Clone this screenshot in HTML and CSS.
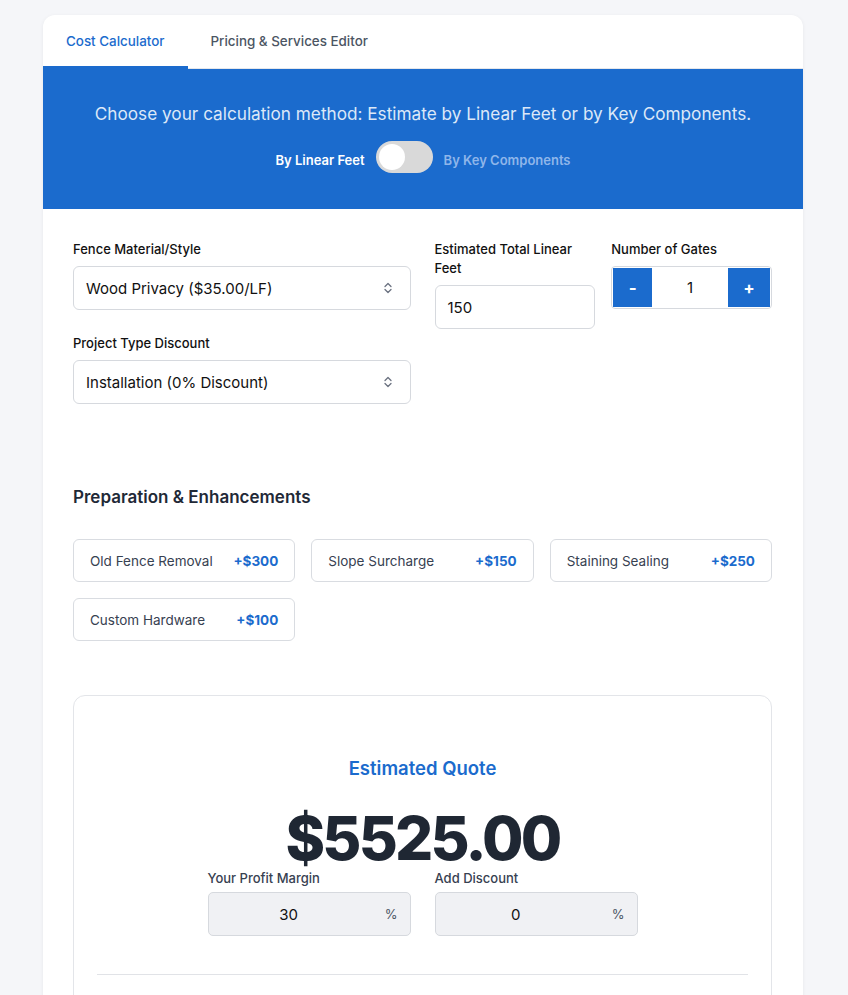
FILE: index.html
```html
<!DOCTYPE html>
<html lang="en">
<head>
<meta charset="utf-8">
<title>Cost Calculator</title>
<link rel="stylesheet" href="styles.css">
</head>
<body>
<div class="card">
  <nav class="tabs">
    <div class="tab active">Cost Calculator</div>
    <div class="tab">Pricing &amp; Services Editor</div>
  </nav>
  <section class="banner">
    <p class="banner-title">Choose your calculation method: Estimate by Linear Feet or by Key Components.</p>
    <div class="toggle-row">
      <span class="toggle-label on">By Linear Feet</span>
      <span class="switch"><span class="knob"></span></span>
      <span class="toggle-label off">By Key Components</span>
    </div>
  </section>
  <section class="content">
    <div class="form-grid">
      <div class="col">
        <div class="field">
          <label class="label">Fence Material/Style</label>
          <div class="select">
            <span>Wood Privacy ($35.00/LF)</span>
            <svg class="chev" width="10" height="14" viewBox="0 0 10 14"><path d="M2 5.5 L5 2.5 L8 5.5 M2 8.5 L5 11.5 L8 8.5" fill="none" stroke="#6b7280" stroke-width="1.3" stroke-linecap="round" stroke-linejoin="round"/></svg>
          </div>
        </div>
        <div class="field">
          <label class="label">Project Type Discount</label>
          <div class="select">
            <span>Installation (0% Discount)</span>
            <svg class="chev" width="10" height="14" viewBox="0 0 10 14"><path d="M2 5.5 L5 2.5 L8 5.5 M2 8.5 L5 11.5 L8 8.5" fill="none" stroke="#6b7280" stroke-width="1.3" stroke-linecap="round" stroke-linejoin="round"/></svg>
          </div>
        </div>
      </div>
      <div class="col-split">
        <div class="field">
          <label class="label">Estimated Total Linear Feet</label>
          <div class="input">150</div>
        </div>
        <div class="field">
          <label class="label">Number of Gates</label>
          <div class="stepper">
            <span class="step-btn">-</span>
            <span class="step-val">1</span>
            <span class="step-btn">+</span>
          </div>
        </div>
      </div>
    </div>

    <h2 class="section-title">Preparation &amp; Enhancements</h2>
    <div class="addons">
      <div class="addon"><span class="addon-name">Old Fence Removal</span><span class="addon-price">+$300</span></div>
      <div class="addon"><span class="addon-name">Slope Surcharge</span><span class="addon-price">+$150</span></div>
      <div class="addon"><span class="addon-name">Staining Sealing</span><span class="addon-price">+$250</span></div>
      <div class="addon"><span class="addon-name">Custom Hardware</span><span class="addon-price">+$100</span></div>
    </div>

    <div class="quote">
      <h3 class="quote-title">Estimated Quote</h3>
      <div class="quote-total">$5525.00</div>
      <div class="adjust">
        <div class="adj-field">
          <label class="adj-label">Your Profit Margin</label>
          <div class="adj-input"><span class="adj-val">30</span><span class="pct">%</span></div>
        </div>
        <div class="adj-field">
          <label class="adj-label">Add Discount</label>
          <div class="adj-input"><span class="adj-val">0</span><span class="pct">%</span></div>
        </div>
      </div>
      <div class="divider"></div>
    </div>
  </section>
</div>
</body>
</html>
```

FILE: styles.css
```css
* { box-sizing: border-box; }
html, body { margin: 0; padding: 0; }
body {
  background: #f5f6f9;
  font-family: Inter, "Noto Sans", "Liberation Sans", sans-serif;
  color: #111827;
  padding-top: 15px;
}
.card {
  width: 760px;
  margin-left: 43px;
  background: #ffffff;
  border-radius: 12px 12px 0 0;
  box-shadow: 0 1px 4px rgba(16, 24, 40, 0.06);
  overflow: hidden;
  min-height: 990px;
}
.tabs {
  display: flex;
  height: 54px;
  border-bottom: 1px solid #e5e7eb;
}
.tab {
  padding: 0 23px;
  display: flex;
  align-items: center;
  font-size: 13.4px;
  font-weight: 500;
  color: #4b5563;
  border-bottom: 3px solid transparent;
  margin-bottom: -1px;
}
.tab.active {
  color: #1b6bcd;
  border-bottom-color: #1b6bcd;
}
.banner {
  background: #1b6bcd;
  height: 140px;
  padding-top: 34px;
  text-align: center;
}
.banner-title {
  margin: 0;
  font-size: 17.2px;
  line-height: 22px;
  color: #dce8f8;
}
.toggle-row {
  margin-top: 16px;
  display: flex;
  justify-content: center;
  align-items: center;
  gap: 11px;
}
.toggle-label {
  font-size: 13px;
  font-weight: 600;
  margin-top: 5px;
}
.toggle-label.on { color: #ffffff; }
.toggle-label.off { color: #8fb6ea; }
.switch {
  width: 57px;
  height: 32px;
  border-radius: 16px;
  background: #d9d9d9;
  padding: 3px;
  display: flex;
  align-items: center;
}
.knob {
  width: 26px;
  height: 26px;
  border-radius: 50%;
  background: #ffffff;
}
.content {
  padding: 31px 31px 0 30px;
}
.form-grid {
  display: grid;
  grid-template-columns: 1fr 1fr;
  gap: 24px;
}
.col {
  display: flex;
  flex-direction: column;
  gap: 24px;
}
.col-split {
  display: grid;
  grid-template-columns: 1fr 1fr;
  gap: 16px;
  align-items: start;
}
.field {
  display: flex;
  flex-direction: column;
}
.label {
  font-size: 13px;
  font-weight: 500;
  line-height: 19px;
  color: #111111;
  margin-bottom: 7px;
}
.select, .input {
  height: 44px;
  border: 1px solid #d6d9de;
  border-radius: 6px;
  padding: 0 12px;
  display: flex;
  align-items: center;
  font-size: 15px;
  color: #111111;
  background: #fff;
}
.select { justify-content: space-between; padding-right: 17px; }
.chev { display: block; }
.stepper {
  height: 43px;
  border: 1px solid #d6d9de;
  border-radius: 4px;
  display: flex;
  align-items: stretch;
  padding: 1px;
}
.step-btn {
  width: 39px;
  background: #1b6bcd;
  color: #fff;
  font-weight: 700;
  font-size: 17px;
  display: flex;
  align-items: center;
  justify-content: center;
}
.step-btn:last-child { width: 42px; }
.step-val {
  flex: 1;
  display: flex;
  align-items: center;
  justify-content: center;
  font-size: 15px;
  color: #111;
}
.section-title {
  margin: 82px 0 0;
  font-size: 17px;
  font-weight: 600;
  line-height: 22px;
  color: #1f2937;
}
.addons {
  margin-top: 31px;
  display: grid;
  grid-template-columns: repeat(3, 1fr);
  gap: 16px;
}
.addon {
  height: 43px;
  border: 1px solid #d9dce1;
  border-radius: 6px;
  padding: 0 16px;
  display: flex;
  align-items: center;
  justify-content: space-between;
}
.addon-name {
  font-size: 13.5px;
  color: #374151;
}
.addon-price {
  font-size: 13.5px;
  font-weight: 700;
  color: #1b6bcd;
}
.quote {
  margin-top: 54px;
  border: 1px solid #e3e5e9;
  border-radius: 12px;
  padding: 59px 23px 40px;
  text-align: center;
}
.quote-title {
  margin: 0;
  font-size: 18.5px;
  font-weight: 600;
  line-height: 26px;
  color: #1b6bcd;
}
.quote-total {
  margin-top: 26px;
  font-size: 60px;
  font-weight: 800;
  line-height: 62px;
  letter-spacing: -2.8px;
  color: #1f2733;
}
.adjust {
  width: 430px;
  margin: 1px auto 0;
  display: grid;
  grid-template-columns: 1fr 1fr;
  gap: 24px;
  text-align: left;
}
.adj-label {
  display: block;
  font-size: 13px;
  font-weight: 500;
  line-height: 17px;
  color: #374151;
  margin-bottom: 5px;
}
.adj-input {
  height: 44px;
  border: 1px solid #d6d9de;
  border-radius: 5px;
  background: #f0f1f4;
  display: flex;
  align-items: center;
  padding: 0 12px 0 12px;
}
.adj-val {
  flex: 1;
  text-align: center;
  font-size: 15px;
  color: #111;
  padding-right: 28px;
}
.pct {
  font-size: 13px;
  color: #4b5563;
}
.divider {
  margin-top: 38px;
  border-top: 1px solid #e1e3e7;
}
```
